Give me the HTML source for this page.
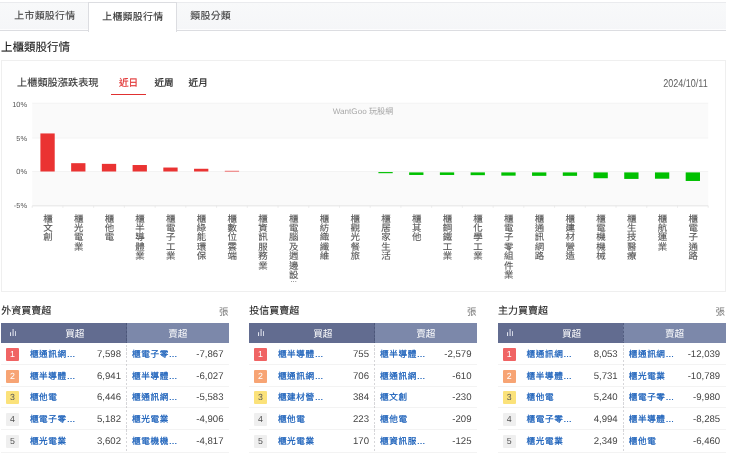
<!DOCTYPE html>
<html lang="zh-Hant">
<head>
<meta charset="utf-8">
<title>上櫃類股行情</title>
<style>
html,body{margin:0;padding:0;background:#fff;}
body{width:740px;height:456px;overflow:hidden;position:relative;font-family:"Liberation Sans","Noto Sans CJK TC",sans-serif;color:#333;text-rendering:geometricPrecision;}
#wrap{position:absolute;left:0;top:0;width:740px;height:456px;will-change:transform;}
.tabbar{position:absolute;left:0;top:1.7px;width:725.6px;height:29.8px;background:linear-gradient(to bottom,#f8f9fa,#f5f6f8);border-top:1px solid #eaebee;border-bottom:1.7px solid #dcdde1;box-shadow:inset 0 -1px 0 #fdfdfe;box-sizing:border-box;}
.tab{-webkit-text-stroke:0.12px currentColor;position:absolute;top:0.5px;height:31px;line-height:32px;font-size:9.9px;letter-spacing:0.3px;text-indent:0.3px;transform:translate(0.7px,0.3px);color:#444;text-align:center;white-space:nowrap;}
.tab.act{background:#fff;border-left:1px solid #dcdde1;border-right:1px solid #dcdde1;border-top:1px solid #dcdde1;box-sizing:border-box;top:1.8px;height:29.8px;line-height:28.6px;color:#333;transform:none;padding-top:0px;}
.tab.act span{display:inline-block;transform:translateY(0.5px);}
.h{-webkit-text-stroke:0.12px currentColor;position:absolute;left:1px;top:38.2px;transform:translateY(0.5px);font-size:11.5px;line-height:18px;color:#222;white-space:nowrap;}
.card{position:absolute;left:0.5px;top:59.6px;width:725.5px;height:232px;border:1.8px solid #efefef;box-sizing:border-box;background:#fff;}
.ct{position:absolute;left:17px;top:74.5px;-webkit-text-stroke:0.12px currentColor;font-size:10.1px;line-height:18px;color:#333;white-space:nowrap;letter-spacing:0.1px;}
.pt{position:absolute;top:74.8px;font-size:9.6px;line-height:18px;color:#222;-webkit-text-stroke:0.2px currentColor;white-space:nowrap;}
.pt.on{color:#e03030;}
.ul{position:absolute;left:111.3px;top:93.7px;width:34.7px;height:1.5px;background:#e03030;}
.date{position:absolute;right:32.2px;top:74px;font-size:11.3px;line-height:18px;color:#626262;white-space:nowrap;transform:translateY(0.7px) scale(0.8,1);transform-origin:100% 50%;}
.chart{position:absolute;left:0;top:97px;}
.yl{font-size:7.4px;fill:#555;font-family:"Liberation Sans",sans-serif;}
.xl{font-size:9.1px;fill:#555;stroke:#555;stroke-width:0.1px;font-family:"Liberation Sans","Noto Sans CJK TC",sans-serif;}
.el{font-size:6.5px;}
.wm{font-size:8.15px;fill:#a8a8a8;font-family:"Liberation Sans","Noto Sans CJK TC",sans-serif;}
.tb{position:absolute;top:300px;width:228px;height:156px;}
.tt{-webkit-text-stroke:0.12px currentColor;position:absolute;left:0.3px;top:3.1px;font-size:10px;line-height:18px;color:#222;white-space:nowrap;}
.unit{position:absolute;right:0.6px;top:3.9px;font-size:9.5px;line-height:18px;color:#777;}
.hd{position:absolute;left:0;top:23.2px;width:228px;height:20px;background:#626c90;}
.h1{position:absolute;left:0;top:0;width:125.6px;height:20px;line-height:20px;padding-top:2px;box-sizing:border-box;text-align:center;color:#fff;font-size:9.6px;}
.h1 span{position:relative;left:11px;}
.ic{position:absolute;left:9px;top:5.4px;}
.h2{position:absolute;left:125.6px;top:0;width:102.4px;height:20px;line-height:20px;padding-top:2px;box-sizing:border-box;text-align:center;color:#fff;font-size:9.6px;background:#7c88aa;}
.row{position:absolute;left:0;width:228px;height:0;font-size:9.6px;line-height:14px;}
.row span{position:absolute;top:-7px;white-space:nowrap;}
.row::after{content:"";position:absolute;left:0;top:9.9px;width:228px;height:1px;background:#f3f3f3;}
.row.r5::after{top:10.7px;}
.bd{left:5.2px;width:12.7px;height:13px;line-height:13.2px;top:-6.4px !important;text-align:center;font-size:8.8px;border-radius:1px;}
.b1{background:#f06464;color:#fff;}
.b2{background:#f7a474;color:#fff;}
.b3{background:#fbe27a;color:#555;}
.b4,.b5{background:#efefef;color:#555;}
.n1{left:28.9px;color:#155cb8;letter-spacing:0.6px;font-size:8.6px;transform:translateY(0.4px);-webkit-text-stroke:0.22px currentColor;}
.v1{right:108.0px;color:#444;font-size:9.6px;transform:translateY(0.5px);}
.n2{left:131.1px;color:#155cb8;letter-spacing:0.6px;font-size:8.6px;transform:translateY(0.4px);-webkit-text-stroke:0.22px currentColor;}
.v2{right:5.5px;color:#444;font-size:9.6px;transform:translateY(0.5px);}
.seph{position:absolute;left:125.1px;top:23.2px;width:1.2px;height:20px;background:repeating-linear-gradient(to bottom,rgba(70,80,115,0.75) 0,rgba(70,80,115,0.75) 2.4px,rgba(70,80,115,0.25) 2.4px,rgba(70,80,115,0.25) 3.85px);}
.sep{position:absolute;left:125.2px;top:43.2px;width:1px;height:108.5px;background:repeating-linear-gradient(to bottom,transparent 0,transparent 1.6px,rgba(120,120,130,0.3) 1.6px,rgba(120,120,130,0.3) 3.85px);}
</style>
</head>
<body>
<div id="wrap">
<div class="tabbar"></div>
<div class="tab" style="left:0;width:88px;">上市類股行情</div>
<div class="tab act" style="left:88px;width:89px;"><span>上櫃類股行情</span></div>
<div class="tab" style="left:175.8px;width:68px;">類股分類</div>
<div class="h">上櫃類股行情</div>
<div class="card"></div>
<div class="ct">上櫃類股漲跌表現</div>
<div class="pt on" style="left:119px;">近日</div>
<div class="pt" style="left:154.4px;">近周</div>
<div class="pt" style="left:188.6px;">近月</div>
<div class="ul"></div>
<div class="date">2024/10/11</div>
<svg class="chart" width="725" height="195" viewBox="0 97 725 195">
<rect x="32.2" y="103.20" width="676.0" height="34.80" fill="#fafafa"/>
<rect x="32.2" y="171.50" width="676.0" height="34.30" fill="#fafafa"/>
<line x1="32.2" x2="708.2" y1="103.20" y2="103.20" stroke="#f0f0f0" stroke-width="0.75"/>
<line x1="32.2" x2="708.2" y1="138.00" y2="138.00" stroke="#f0f0f0" stroke-width="0.75"/>
<line x1="32.2" x2="708.2" y1="171.50" y2="171.50" stroke="#f0f0f0" stroke-width="0.75"/>
<line x1="32.2" x2="708.2" y1="205.80" y2="205.80" stroke="#f0f0f0" stroke-width="0.75"/>
<line x1="32.2" x2="708.2" y1="205.80" y2="205.80" stroke="#e5e5e5" stroke-width="0.75"/>
<line x1="32.20" x2="32.20" y1="205.80" y2="207.80" stroke="#e5e5e5" stroke-width="0.75"/>
<line x1="62.93" x2="62.93" y1="205.80" y2="207.80" stroke="#e5e5e5" stroke-width="0.75"/>
<line x1="93.65" x2="93.65" y1="205.80" y2="207.80" stroke="#e5e5e5" stroke-width="0.75"/>
<line x1="124.38" x2="124.38" y1="205.80" y2="207.80" stroke="#e5e5e5" stroke-width="0.75"/>
<line x1="155.11" x2="155.11" y1="205.80" y2="207.80" stroke="#e5e5e5" stroke-width="0.75"/>
<line x1="185.84" x2="185.84" y1="205.80" y2="207.80" stroke="#e5e5e5" stroke-width="0.75"/>
<line x1="216.56" x2="216.56" y1="205.80" y2="207.80" stroke="#e5e5e5" stroke-width="0.75"/>
<line x1="247.29" x2="247.29" y1="205.80" y2="207.80" stroke="#e5e5e5" stroke-width="0.75"/>
<line x1="278.02" x2="278.02" y1="205.80" y2="207.80" stroke="#e5e5e5" stroke-width="0.75"/>
<line x1="308.75" x2="308.75" y1="205.80" y2="207.80" stroke="#e5e5e5" stroke-width="0.75"/>
<line x1="339.47" x2="339.47" y1="205.80" y2="207.80" stroke="#e5e5e5" stroke-width="0.75"/>
<line x1="370.20" x2="370.20" y1="205.80" y2="207.80" stroke="#e5e5e5" stroke-width="0.75"/>
<line x1="400.93" x2="400.93" y1="205.80" y2="207.80" stroke="#e5e5e5" stroke-width="0.75"/>
<line x1="431.65" x2="431.65" y1="205.80" y2="207.80" stroke="#e5e5e5" stroke-width="0.75"/>
<line x1="462.38" x2="462.38" y1="205.80" y2="207.80" stroke="#e5e5e5" stroke-width="0.75"/>
<line x1="493.11" x2="493.11" y1="205.80" y2="207.80" stroke="#e5e5e5" stroke-width="0.75"/>
<line x1="523.84" x2="523.84" y1="205.80" y2="207.80" stroke="#e5e5e5" stroke-width="0.75"/>
<line x1="554.56" x2="554.56" y1="205.80" y2="207.80" stroke="#e5e5e5" stroke-width="0.75"/>
<line x1="585.29" x2="585.29" y1="205.80" y2="207.80" stroke="#e5e5e5" stroke-width="0.75"/>
<line x1="616.02" x2="616.02" y1="205.80" y2="207.80" stroke="#e5e5e5" stroke-width="0.75"/>
<line x1="646.75" x2="646.75" y1="205.80" y2="207.80" stroke="#e5e5e5" stroke-width="0.75"/>
<line x1="677.47" x2="677.47" y1="205.80" y2="207.80" stroke="#e5e5e5" stroke-width="0.75"/>
<line x1="708.20" x2="708.20" y1="205.80" y2="207.80" stroke="#e5e5e5" stroke-width="0.75"/>
<text x="27" y="107.25" text-anchor="end" class="yl">10%</text>
<text x="27" y="140.85" text-anchor="end" class="yl">5%</text>
<text x="27" y="174.05" text-anchor="end" class="yl">0%</text>
<text x="27" y="207.95" text-anchor="end" class="yl">-5%</text>
<text x="363" y="113.5" text-anchor="middle" class="wm">WantGoo 玩股網</text>
<rect x="40.41" y="133.44" width="14.3" height="38.06" fill="#ea3332"/>
<text transform="translate(47.91 0) scale(1.04 1)" x="0 0 0" y="221.60 231.03 240.46" text-anchor="middle" class="xl">櫃文創</text>
<rect x="71.14" y="163.18" width="14.3" height="8.32" fill="#ea3332"/>
<text transform="translate(78.64 0) scale(1.04 1)" x="0 0 0 0" y="221.60 231.03 240.46 249.89" text-anchor="middle" class="xl">櫃光電業</text>
<rect x="101.87" y="163.86" width="14.3" height="7.64" fill="#ea3332"/>
<text transform="translate(109.37 0) scale(1.04 1)" x="0 0 0" y="221.60 231.03 240.46" text-anchor="middle" class="xl">櫃他電</text>
<rect x="132.60" y="165.02" width="14.3" height="6.48" fill="#ea3332"/>
<text transform="translate(140.10 0) scale(1.04 1)" x="0 0 0 0 0" y="221.60 231.03 240.46 249.89 259.32" text-anchor="middle" class="xl">櫃半導體業</text>
<rect x="163.32" y="167.54" width="14.3" height="3.96" fill="#ea3332"/>
<text transform="translate(170.82 0) scale(1.04 1)" x="0 0 0 0 0" y="221.60 231.03 240.46 249.89 259.32" text-anchor="middle" class="xl">櫃電子工業</text>
<rect x="194.05" y="168.77" width="14.3" height="2.73" fill="#ea3332"/>
<text transform="translate(201.55 0) scale(1.04 1)" x="0 0 0 0 0" y="221.60 231.03 240.46 249.89 259.32" text-anchor="middle" class="xl">櫃綠能環保</text>
<rect x="224.78" y="170.82" width="14.3" height="0.68" fill="#ea3332"/>
<text transform="translate(232.28 0) scale(1.04 1)" x="0 0 0 0 0" y="221.60 231.03 240.46 249.89 259.32" text-anchor="middle" class="xl">櫃數位雲端</text>
<text transform="translate(263.00 0) scale(1.04 1)" x="0 0 0 0 0 0" y="221.60 231.03 240.46 249.89 259.32 268.75" text-anchor="middle" class="xl">櫃資訊服務業</text>
<text transform="translate(293.73 0) scale(1.04 1)" x="0 0 0 0 0 0 0 0" y="221.60 231.03 240.46 249.89 259.32 268.75 278.18 281.71" text-anchor="middle" class="xl">櫃電腦及週邊設<tspan class="el">…</tspan></text>
<text transform="translate(324.46 0) scale(1.04 1)" x="0 0 0 0 0" y="221.60 231.03 240.46 249.89 259.32" text-anchor="middle" class="xl">櫃紡織纖維</text>
<text transform="translate(355.19 0) scale(1.04 1)" x="0 0 0 0 0" y="221.60 231.03 240.46 249.89 259.32" text-anchor="middle" class="xl">櫃觀光餐旅</text>
<rect x="378.41" y="172.05" width="14.3" height="1.15" fill="#00c000"/>
<text transform="translate(385.91 0) scale(1.04 1)" x="0 0 0 0 0" y="221.60 231.03 240.46 249.89 259.32" text-anchor="middle" class="xl">櫃居家生活</text>
<rect x="409.14" y="172.40" width="14.3" height="2.56" fill="#00c000"/>
<text transform="translate(416.64 0) scale(1.04 1)" x="0 0 0" y="221.60 231.03 240.46" text-anchor="middle" class="xl">櫃其他</text>
<rect x="439.87" y="172.40" width="14.3" height="2.56" fill="#00c000"/>
<text transform="translate(447.37 0) scale(1.04 1)" x="0 0 0 0 0" y="221.60 231.03 240.46 249.89 259.32" text-anchor="middle" class="xl">櫃鋼鐵工業</text>
<rect x="470.60" y="172.40" width="14.3" height="2.77" fill="#00c000"/>
<text transform="translate(478.10 0) scale(1.04 1)" x="0 0 0 0 0" y="221.60 231.03 240.46 249.89 259.32" text-anchor="middle" class="xl">櫃化學工業</text>
<rect x="501.32" y="172.40" width="14.3" height="3.25" fill="#00c000"/>
<text transform="translate(508.82 0) scale(1.04 1)" x="0 0 0 0 0 0 0" y="221.60 231.03 240.46 249.89 259.32 268.75 278.18" text-anchor="middle" class="xl">櫃電子零組件業</text>
<rect x="532.05" y="172.40" width="14.3" height="3.45" fill="#00c000"/>
<text transform="translate(539.55 0) scale(1.04 1)" x="0 0 0 0 0" y="221.60 231.03 240.46 249.89 259.32" text-anchor="middle" class="xl">櫃通訊網路</text>
<rect x="562.78" y="172.40" width="14.3" height="3.45" fill="#00c000"/>
<text transform="translate(570.28 0) scale(1.04 1)" x="0 0 0 0 0" y="221.60 231.03 240.46 249.89 259.32" text-anchor="middle" class="xl">櫃建材營造</text>
<rect x="593.50" y="172.40" width="14.3" height="5.84" fill="#00c000"/>
<text transform="translate(601.00 0) scale(1.04 1)" x="0 0 0 0 0" y="221.60 231.03 240.46 249.89 259.32" text-anchor="middle" class="xl">櫃電機機械</text>
<rect x="624.23" y="172.40" width="14.3" height="6.52" fill="#00c000"/>
<text transform="translate(631.73 0) scale(1.04 1)" x="0 0 0 0 0" y="221.60 231.03 240.46 249.89 259.32" text-anchor="middle" class="xl">櫃生技醫療</text>
<rect x="654.96" y="172.40" width="14.3" height="6.32" fill="#00c000"/>
<text transform="translate(662.46 0) scale(1.04 1)" x="0 0 0 0" y="221.60 231.03 240.46 249.89" text-anchor="middle" class="xl">櫃航運業</text>
<rect x="685.69" y="172.40" width="14.3" height="8.57" fill="#00c000"/>
<text transform="translate(693.19 0) scale(1.04 1)" x="0 0 0 0 0" y="221.60 231.03 240.46 249.89 259.32" text-anchor="middle" class="xl">櫃電子通路</text>
</svg>
<div class="tb" style="left:1px">
<div class="tt">外資買賣超</div><div class="unit">張</div>
<div class="hd"><div class="h1"><svg class="ic" width="6.4" height="7.5" viewBox="0 0 6 7"><rect x="0" y="3" width="1" height="4" fill="#dfe3ee"/><rect x="2.4" y="0" width="1" height="7" fill="#dfe3ee"/><rect x="4.8" y="2" width="1" height="5" fill="#dfe3ee"/></svg><span>買超</span></div><div class="h2">賣超</div></div>
<div class="row r1" style="top:54.00px"><span class="bd b1">1</span><span class="n1">櫃通訊網…</span><span class="v1">7,598</span><span class="n2">櫃電子零…</span><span class="v2">-7,867</span></div>
<div class="row r2" style="top:76.00px"><span class="bd b2">2</span><span class="n1">櫃半導體…</span><span class="v1">6,941</span><span class="n2">櫃半導體…</span><span class="v2">-6,027</span></div>
<div class="row r3" style="top:97.00px"><span class="bd b3">3</span><span class="n1">櫃他電</span><span class="v1">6,446</span><span class="n2">櫃通訊網…</span><span class="v2">-5,583</span></div>
<div class="row r4" style="top:119.00px"><span class="bd b4">4</span><span class="n1">櫃電子零…</span><span class="v1">5,182</span><span class="n2">櫃光電業</span><span class="v2">-4,906</span></div>
<div class="row r5" style="top:141.00px"><span class="bd b5">5</span><span class="n1">櫃光電業</span><span class="v1">3,602</span><span class="n2">櫃電機機…</span><span class="v2">-4,817</span></div>
<div class="sep"></div><div class="seph"></div>
</div>
<div class="tb" style="left:249px">
<div class="tt">投信買賣超</div><div class="unit">張</div>
<div class="hd"><div class="h1"><svg class="ic" width="6.4" height="7.5" viewBox="0 0 6 7"><rect x="0" y="3" width="1" height="4" fill="#dfe3ee"/><rect x="2.4" y="0" width="1" height="7" fill="#dfe3ee"/><rect x="4.8" y="2" width="1" height="5" fill="#dfe3ee"/></svg><span>買超</span></div><div class="h2">賣超</div></div>
<div class="row r1" style="top:54.00px"><span class="bd b1">1</span><span class="n1">櫃半導體…</span><span class="v1">755</span><span class="n2">櫃半導體…</span><span class="v2">-2,579</span></div>
<div class="row r2" style="top:76.00px"><span class="bd b2">2</span><span class="n1">櫃通訊網…</span><span class="v1">706</span><span class="n2">櫃通訊網…</span><span class="v2">-610</span></div>
<div class="row r3" style="top:97.00px"><span class="bd b3">3</span><span class="n1">櫃建材營…</span><span class="v1">384</span><span class="n2">櫃文創</span><span class="v2">-230</span></div>
<div class="row r4" style="top:119.00px"><span class="bd b4">4</span><span class="n1">櫃他電</span><span class="v1">223</span><span class="n2">櫃他電</span><span class="v2">-209</span></div>
<div class="row r5" style="top:141.00px"><span class="bd b5">5</span><span class="n1">櫃光電業</span><span class="v1">170</span><span class="n2">櫃資訊服…</span><span class="v2">-125</span></div>
<div class="sep"></div><div class="seph"></div>
</div>
<div class="tb" style="left:497.7px">
<div class="tt">主力買賣超</div><div class="unit">張</div>
<div class="hd"><div class="h1"><svg class="ic" width="6.4" height="7.5" viewBox="0 0 6 7"><rect x="0" y="3" width="1" height="4" fill="#dfe3ee"/><rect x="2.4" y="0" width="1" height="7" fill="#dfe3ee"/><rect x="4.8" y="2" width="1" height="5" fill="#dfe3ee"/></svg><span>買超</span></div><div class="h2">賣超</div></div>
<div class="row r1" style="top:54.00px"><span class="bd b1">1</span><span class="n1">櫃通訊網…</span><span class="v1">8,053</span><span class="n2">櫃通訊網…</span><span class="v2">-12,039</span></div>
<div class="row r2" style="top:76.00px"><span class="bd b2">2</span><span class="n1">櫃半導體…</span><span class="v1">5,731</span><span class="n2">櫃光電業</span><span class="v2">-10,789</span></div>
<div class="row r3" style="top:97.00px"><span class="bd b3">3</span><span class="n1">櫃他電</span><span class="v1">5,240</span><span class="n2">櫃電子零…</span><span class="v2">-9,980</span></div>
<div class="row r4" style="top:119.00px"><span class="bd b4">4</span><span class="n1">櫃電子零…</span><span class="v1">4,994</span><span class="n2">櫃半導體…</span><span class="v2">-8,285</span></div>
<div class="row r5" style="top:141.00px"><span class="bd b5">5</span><span class="n1">櫃光電業</span><span class="v1">2,349</span><span class="n2">櫃他電</span><span class="v2">-6,460</span></div>
<div class="sep"></div><div class="seph"></div>
</div>
</div>
</body>
</html>
